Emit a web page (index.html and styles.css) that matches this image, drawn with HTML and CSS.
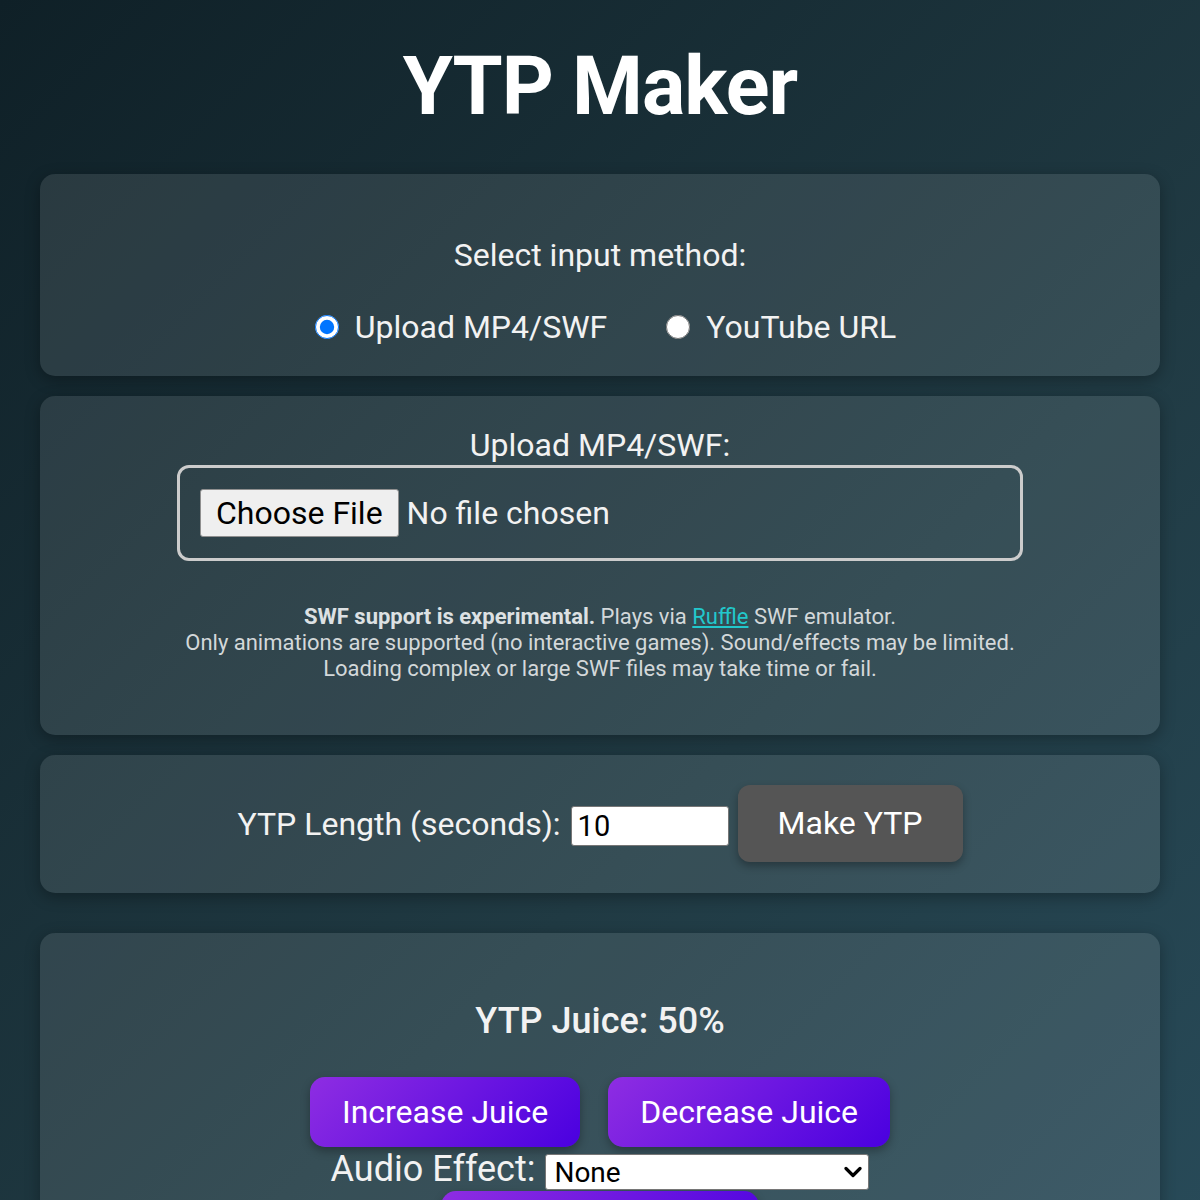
FILE: index.html
```html
<!DOCTYPE html>
<html lang="en">
<head>
<meta charset="utf-8">
<title>YTP Maker</title>
<link rel="stylesheet" href="styles.css">
</head>
<body>
<h1 class="title">YTP Maker</h1>

<section class="card card-method">
  <p class="method-label">Select input method:</p>
  <div class="radio-row">
    <label class="radio-opt"><input type="radio" name="method" checked><span>Upload MP4/SWF</span></label>
    <label class="radio-opt"><input type="radio" name="method"><span>YouTube URL</span></label>
  </div>
</section>

<section class="card card-upload">
  <div class="upload-label">Upload MP4/SWF:</div>
  <div class="file-box"><input class="file-input" type="file" accept=".mp4,.swf"></div>
  <p class="note"><strong>SWF support is experimental.</strong> Plays via <a href="#">Ruffle</a> SWF emulator.<br>Only animations are supported (no interactive games). Sound/effects may be limited.<br>Loading complex or large SWF files may take time or fail.</p>
</section>

<section class="card card-length">
  <label class="length-label" for="len">YTP Length (seconds):</label>
  <input class="length-input" id="len" type="text" value="10">
  <button class="btn-make">Make YTP</button>
</section>

<section class="card card-juice">
  <h2 class="juice-title">YTP Juice: 50%</h2>
  <div class="juice-row">
    <button class="btn-purple">Increase Juice</button>
    <button class="btn-purple">Decrease Juice</button>
  </div>
  <div class="audio-row">
    <label class="audio-label" for="fx">Audio Effect:</label>
    <div class="select-wrap">
      <select class="audio-select" id="fx">
        <option>None</option>
        <option>Echo</option>
        <option>Reverse</option>
        <option>Pitch Up</option>
      </select>
      <svg class="select-arrow" width="18" height="12" viewBox="0 0 18 12" aria-hidden="true"><path d="M2 2.5 L9 9.5 L16 2.5" fill="none" stroke="#000" stroke-width="3.2" stroke-linecap="round" stroke-linejoin="round"/></svg>
    </div>
  </div>
  <div class="apply-row">
    <button class="btn-purple btn-apply">Apply Audio Effect</button>
  </div>
</section>
</body>
</html>
```

FILE: styles.css
```css
html {
  background: #0f2027;
}
body {
  margin: 0;
  padding: 0 40px 60px;
  min-height: 1700px;
  font-family: Roboto, "Liberation Sans", sans-serif;
  color: #f2f2f2;
  background: linear-gradient(135deg, #0f2027 0%, #203a43 50%, #2c5364 100%);
}
.title {
  margin: 39px 0 40px;
  text-align: center;
  font-size: 81px;
  line-height: 95px;
  font-weight: 700;
  color: #ffffff;
  letter-spacing: -1px;
}
.card {
  background: rgba(255, 255, 255, 0.1);
  border-radius: 15px;
  padding: 30px;
  margin-bottom: 20px;
  box-shadow: 0 4px 15px rgba(0, 0, 0, 0.3);
  text-align: center;
}
.method-label {
  margin: 32px 0 33px;
  font-size: 32px;
  line-height: 38px;
}
.radio-row {
  display: flex;
  justify-content: center;
  align-items: center;
  gap: 54px;
  padding-left: 6px;
  font-size: 32px;
  line-height: 38px;
  height: 39px;
}
.radio-opt {
  display: inline-flex;
  align-items: center;
  gap: 16px;
}
.radio-opt input {
  width: 24px;
  height: 24px;
  margin: 0 0 0 5px;
}
.upload-label {
  font-size: 32px;
  line-height: 38px;
}
.file-box {
  box-sizing: border-box;
  width: 846px;
  margin: 1px auto 0;
  border: 3px solid #cccccc;
  border-radius: 12px;
  padding: 21px 20px;
  text-align: left;
  line-height: 0;
}
.file-input {
  font-family: Roboto, "Liberation Sans", sans-serif;
  font-size: 32px;
  line-height: 38px;
  color: #f2f2f2;
  vertical-align: top;
}
.file-input::file-selector-button {
  font-family: Roboto, "Liberation Sans", sans-serif;
  font-size: 32px;
  line-height: 38px;
  color: #000;
  background: #efefef;
  border: 1px solid #8f8f8f;
  border-radius: 3px;
  padding: 4px 15px;
  margin: 0 8px 0 0;
}
.note {
  margin: 43px 0 23px;
  font-size: 22px;
  line-height: 26px;
  color: #d3d8da;
}
.note strong {
  color: #dde1e3;
}
.note a {
  color: #22c8cc;
}
.card-length {
  display: flex;
  justify-content: center;
  align-items: center;
  gap: 9px;
  padding: 30px 30px 31px;
}
.length-label {
  font-size: 32px;
  line-height: 38px;
  margin-right: 1px;
}
.length-input {
  box-sizing: border-box;
  width: 158px;
  height: 40px;
  padding: 1px 6px;
  font-family: Roboto, "Liberation Sans", sans-serif;
  font-size: 29px;
  color: #000;
  background: #fff;
  border: 1px solid #767676;
  border-radius: 3px;
  margin-top: 5px;
}
.btn-make {
  flex-shrink: 0;
  white-space: nowrap;
  font-family: Roboto, "Liberation Sans", sans-serif;
  font-size: 32px;
  line-height: 37px;
  padding: 20px 40px;
  color: #ffffff;
  background: #555555;
  border: none;
  border-radius: 12px;
  box-shadow: 0 4px 8px rgba(0, 0, 0, 0.3);
}
.card-juice {
  margin-top: 40px;
}
.juice-title {
  margin: 37px 0 35px;
  font-size: 36px;
  line-height: 42px;
  font-weight: 500;
}
.juice-row {
  display: flex;
  justify-content: center;
  gap: 28px;
}
.btn-purple {
  white-space: nowrap;
  font-family: Roboto, "Liberation Sans", sans-serif;
  font-size: 32px;
  line-height: 38px;
  padding: 16px 32px;
  color: #ffffff;
  border: none;
  border-radius: 15px;
  background: linear-gradient(135deg, #8e2de2, #4a00e0);
  box-shadow: 0 4px 10px rgba(0, 0, 0, 0.3);
}
.audio-row {
  display: flex;
  justify-content: center;
  align-items: center;
  gap: 10px;
  height: 44px;
}
.audio-label {
  font-size: 36px;
  line-height: 42px;
}
.select-wrap {
  position: relative;
  margin-top: 6px;
  height: 36px;
}
.audio-select {
  box-sizing: border-box;
  width: 324px;
  height: 36px;
  padding: 0 8px;
  appearance: none;
  -webkit-appearance: none;
  font-family: Roboto, "Liberation Sans", sans-serif;
  font-size: 28px;
  color: #000;
  background: #fff;
  border: 1px solid #767676;
  border-radius: 3px;
}
.select-arrow {
  position: absolute;
  right: 7px;
  top: 12px;
  pointer-events: none;
}
.apply-row {
  display: flex;
  justify-content: center;
}
.btn-apply {
  width: 318px;
}
```
